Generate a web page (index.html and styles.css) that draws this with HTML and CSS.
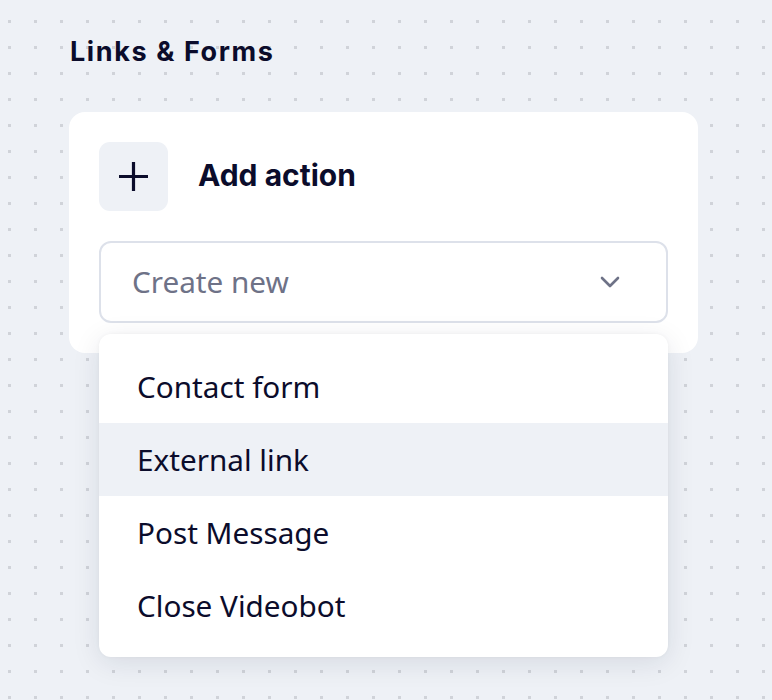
FILE: index.html
```html
<!DOCTYPE html>
<html lang="en">
<head>
<meta charset="utf-8">
<title>Links &amp; Forms</title>
<link rel="stylesheet" href="styles.css">
</head>
<body>
<main class="panel">
  <h2 class="section-title">Links &amp; Forms</h2>
  <section class="card">
    <div class="card-head">
      <button class="add-btn" type="button" aria-label="Add action">
        <svg width="29" height="29" viewBox="0 0 29 29" aria-hidden="true">
          <path d="M14.5 0V29M0 14.5H29" stroke="#0b0c2b" stroke-width="3.2" fill="none"/>
        </svg>
      </button>
      <span class="card-title">Add action</span>
    </div>
    <div class="select-wrap">
      <div class="select">
        <span class="select-placeholder">Create new</span>
        <svg class="chevron" width="20" height="12" viewBox="0 0 20 12" aria-hidden="true">
          <path d="M2 2L10 10L18 2" stroke="#6e7287" stroke-width="2.6" fill="none" stroke-linecap="round" stroke-linejoin="round"/>
        </svg>
      </div>
      <ul class="menu">
        <li class="menu-item">Contact form</li>
        <li class="menu-item is-hover">External link</li>
        <li class="menu-item">Post Message</li>
        <li class="menu-item">Close Videobot</li>
      </ul>
    </div>
  </section>
</main>
</body>
</html>
```
FILE: styles.css
```css
html {
  background-color: #eef1f6;
  background-image:
    linear-gradient(to right, #eef1f6 0 23px, transparent 23px 26px),
    linear-gradient(to bottom, #eef1f6 0 23px, #d0d3d9 23px 26px);
  background-size: 26px 26px, 26px 26px;
  background-position: 11px 23px, 11px 23px;
}

body {
  margin: 0;
  min-height: 700px;
  font-family: "Noto Sans", "Open Sans", sans-serif;
  color: #0b0c2b;
}

.panel {
  padding: 34px 0 0 69px;
  width: 629px;
}

.section-title {
  margin: 0 0 42px 0;
  font-family: "Inter", "Noto Sans", sans-serif;
  font-weight: 700;
  font-size: 27px;
  letter-spacing: 1.6px;
  line-height: 36px;
  color: #0b0c2b;
  padding-left: 1px;
}

.card {
  position: relative;
  background: #ffffff;
  border-radius: 16px;
  padding: 30px;
  display: flex;
  flex-direction: column;
  gap: 30px;
}

.card-head {
  display: flex;
  align-items: center;
  gap: 30px;
}

.add-btn {
  width: 69px;
  height: 69px;
  border: 0;
  border-radius: 11px;
  background: #eef1f6;
  display: flex;
  align-items: center;
  justify-content: center;
  padding: 0;
}

.card-title {
  font-family: "Inter", "Noto Sans", sans-serif;
  font-weight: 700;
  font-size: 30px;
  line-height: 36px;
  margin-top: -3px;
  color: #0b0c2b;
}

.select-wrap {
  position: relative;
  z-index: 5;
}

.select {
  height: 82px;
  box-sizing: border-box;
  border: 2px solid #dde1ea;
  border-radius: 12px;
  display: flex;
  align-items: center;
  justify-content: space-between;
  padding: 0 46px 0 31px;
}

.select-placeholder {
  font-size: 29.7px;
  line-height: 40px;
  color: #6e7287;
}

.menu {
  position: absolute;
  z-index: 10;
  top: 93px;
  left: 0;
  right: 0;
  margin: 0;
  padding: 16px 0 15px;
  list-style: none;
  background: #ffffff;
  border-radius: 12px;
  box-shadow: 0 6px 28px rgba(20, 30, 60, 0.10), 0 0 4px rgba(20, 30, 60, 0.04);
}

.menu-item {
  height: 73px;
  display: flex;
  align-items: center;
  padding-left: 38px;
  font-size: 29.7px;
  color: #0b0c2b;
}

.menu-item.is-hover {
  background: #eef1f6;
}
```
